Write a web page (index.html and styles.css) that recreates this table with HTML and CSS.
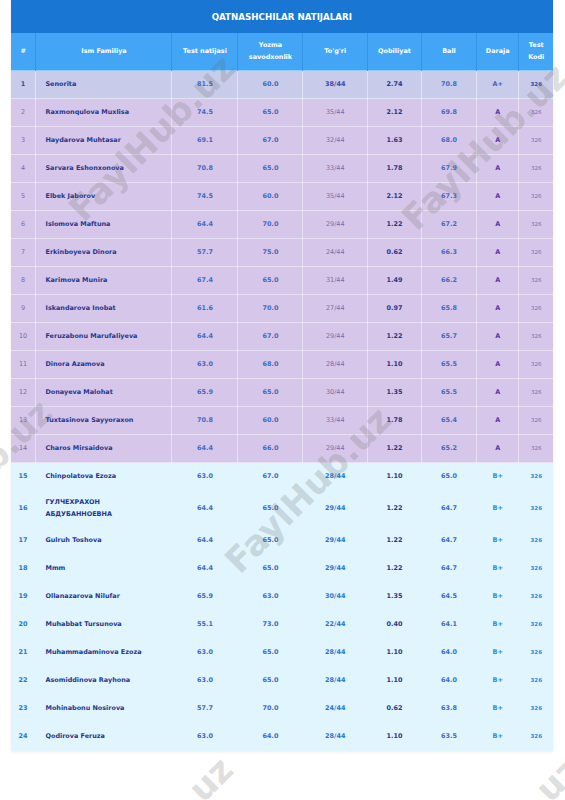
FILE: index.html
```html
<!DOCTYPE html>
<html lang="uz">
<head>
    <meta charset="UTF-8">
    <meta name="viewport" content="width=device-width, initial-scale=1.0">
    <title>Qatnashchilar natijalari</title>
    <link rel="stylesheet" href="styles.css">
</head>
<body>
    <div class="page">
        <div class="results">
            <div class="results-title">QATNASHCHILAR NATIJALARI</div>
            <table class="results-table">
                <colgroup>
                    <col style="width: 25.3px">
                    <col style="width: 136px">
                    <col style="width: 66px">
                    <col style="width: 65px">
                    <col style="width: 64.5px">
                    <col style="width: 54px">
                    <col style="width: 55px">
                    <col style="width: 42.5px">
                    <col style="width: 34px">
                </colgroup>
                <thead>
                    <tr>
                        <th>#</th>
                        <th>Ism Familiya</th>
                        <th>Test natijasi</th>
                        <th>Yozma savodxonlik</th>
                        <th>To'g'ri</th>
                        <th>Qobiliyat</th>
                        <th>Ball</th>
                        <th>Daraja</th>
                        <th>Test Kodi</th>
                    </tr>
                </thead>
                <tbody>
                    <tr class="grade-aplus"><td class="num">1</td><td class="name">Senorita</td><td class="score">81.5</td><td class="score">60.0</td><td class="correct">38/44</td><td class="ability">2.74</td><td class="score">70.8</td><td class="grade">A+</td><td class="code">326</td></tr>
                    <tr class="grade-a"><td class="num">2</td><td class="name">Raxmonqulova Muxlisa</td><td class="score">74.5</td><td class="score">65.0</td><td class="correct">35/44</td><td class="ability">2.12</td><td class="score">69.8</td><td class="grade">A</td><td class="code">326</td></tr>
                    <tr class="grade-a"><td class="num">3</td><td class="name">Haydarova Muhtasar</td><td class="score">69.1</td><td class="score">67.0</td><td class="correct">32/44</td><td class="ability">1.63</td><td class="score">68.0</td><td class="grade">A</td><td class="code">326</td></tr>
                    <tr class="grade-a"><td class="num">4</td><td class="name">Sarvara Eshonxonova</td><td class="score">70.8</td><td class="score">65.0</td><td class="correct">33/44</td><td class="ability">1.78</td><td class="score">67.9</td><td class="grade">A</td><td class="code">326</td></tr>
                    <tr class="grade-a"><td class="num">5</td><td class="name">Elbek Jaborov</td><td class="score">74.5</td><td class="score">60.0</td><td class="correct">35/44</td><td class="ability">2.12</td><td class="score">67.3</td><td class="grade">A</td><td class="code">326</td></tr>
                    <tr class="grade-a"><td class="num">6</td><td class="name">Islomova Maftuna</td><td class="score">64.4</td><td class="score">70.0</td><td class="correct">29/44</td><td class="ability">1.22</td><td class="score">67.2</td><td class="grade">A</td><td class="code">326</td></tr>
                    <tr class="grade-a"><td class="num">7</td><td class="name">Erkinboyeva Dinora</td><td class="score">57.7</td><td class="score">75.0</td><td class="correct">24/44</td><td class="ability">0.62</td><td class="score">66.3</td><td class="grade">A</td><td class="code">326</td></tr>
                    <tr class="grade-a"><td class="num">8</td><td class="name">Karimova Munira</td><td class="score">67.4</td><td class="score">65.0</td><td class="correct">31/44</td><td class="ability">1.49</td><td class="score">66.2</td><td class="grade">A</td><td class="code">326</td></tr>
                    <tr class="grade-a"><td class="num">9</td><td class="name">Iskandarova Inobat</td><td class="score">61.6</td><td class="score">70.0</td><td class="correct">27/44</td><td class="ability">0.97</td><td class="score">65.8</td><td class="grade">A</td><td class="code">326</td></tr>
                    <tr class="grade-a"><td class="num">10</td><td class="name">Feruzabonu Marufaliyeva</td><td class="score">64.4</td><td class="score">67.0</td><td class="correct">29/44</td><td class="ability">1.22</td><td class="score">65.7</td><td class="grade">A</td><td class="code">326</td></tr>
                    <tr class="grade-a"><td class="num">11</td><td class="name">Dinora Azamova</td><td class="score">63.0</td><td class="score">68.0</td><td class="correct">28/44</td><td class="ability">1.10</td><td class="score">65.5</td><td class="grade">A</td><td class="code">326</td></tr>
                    <tr class="grade-a"><td class="num">12</td><td class="name">Donayeva Malohat</td><td class="score">65.9</td><td class="score">65.0</td><td class="correct">30/44</td><td class="ability">1.35</td><td class="score">65.5</td><td class="grade">A</td><td class="code">326</td></tr>
                    <tr class="grade-a"><td class="num">13</td><td class="name">Tuxtasinova Sayyoraxon</td><td class="score">70.8</td><td class="score">60.0</td><td class="correct">33/44</td><td class="ability">1.78</td><td class="score">65.4</td><td class="grade">A</td><td class="code">326</td></tr>
                    <tr class="grade-a"><td class="num">14</td><td class="name">Charos Mirsaidova</td><td class="score">64.4</td><td class="score">66.0</td><td class="correct">29/44</td><td class="ability">1.22</td><td class="score">65.2</td><td class="grade">A</td><td class="code">326</td></tr>
                    <tr class="grade-bplus"><td class="num">15</td><td class="name">Chinpolatova Ezoza</td><td class="score">63.0</td><td class="score">67.0</td><td class="correct">28/44</td><td class="ability">1.10</td><td class="score">65.0</td><td class="grade">B+</td><td class="code">326</td></tr>
                    <tr class="grade-bplus"><td class="num">16</td><td class="name">ГУЛЧЕХРАХОН АБДУБАННОЕВНА</td><td class="score">64.4</td><td class="score">65.0</td><td class="correct">29/44</td><td class="ability">1.22</td><td class="score">64.7</td><td class="grade">B+</td><td class="code">326</td></tr>
                    <tr class="grade-bplus"><td class="num">17</td><td class="name">Gulruh Toshova</td><td class="score">64.4</td><td class="score">65.0</td><td class="correct">29/44</td><td class="ability">1.22</td><td class="score">64.7</td><td class="grade">B+</td><td class="code">326</td></tr>
                    <tr class="grade-bplus"><td class="num">18</td><td class="name">Mmm</td><td class="score">64.4</td><td class="score">65.0</td><td class="correct">29/44</td><td class="ability">1.22</td><td class="score">64.7</td><td class="grade">B+</td><td class="code">326</td></tr>
                    <tr class="grade-bplus"><td class="num">19</td><td class="name">Ollanazarova Nilufar</td><td class="score">65.9</td><td class="score">63.0</td><td class="correct">30/44</td><td class="ability">1.35</td><td class="score">64.5</td><td class="grade">B+</td><td class="code">326</td></tr>
                    <tr class="grade-bplus"><td class="num">20</td><td class="name">Muhabbat Tursunova</td><td class="score">55.1</td><td class="score">73.0</td><td class="correct">22/44</td><td class="ability">0.40</td><td class="score">64.1</td><td class="grade">B+</td><td class="code">326</td></tr>
                    <tr class="grade-bplus"><td class="num">21</td><td class="name">Muhammadaminova Ezoza</td><td class="score">63.0</td><td class="score">65.0</td><td class="correct">28/44</td><td class="ability">1.10</td><td class="score">64.0</td><td class="grade">B+</td><td class="code">326</td></tr>
                    <tr class="grade-bplus"><td class="num">22</td><td class="name">Asomiddinova Rayhona</td><td class="score">63.0</td><td class="score">65.0</td><td class="correct">28/44</td><td class="ability">1.10</td><td class="score">64.0</td><td class="grade">B+</td><td class="code">326</td></tr>
                    <tr class="grade-bplus"><td class="num">23</td><td class="name">Mohinabonu Nosirova</td><td class="score">57.7</td><td class="score">70.0</td><td class="correct">24/44</td><td class="ability">0.62</td><td class="score">63.8</td><td class="grade">B+</td><td class="code">326</td></tr>
                    <tr class="grade-bplus"><td class="num">24</td><td class="name">Qodirova Feruza</td><td class="score">63.0</td><td class="score">64.0</td><td class="correct">28/44</td><td class="ability">1.10</td><td class="score">63.5</td><td class="grade">B+</td><td class="code">326</td></tr>
                </tbody>
            </table>
        </div>

        <div class="watermark wm-1">FaylHub.uz</div>
        <div class="watermark wm-2">FaylHub.uz</div>
        <div class="watermark wm-3">FaylHub.uz</div>
        <div class="watermark wm-4">FaylHub.uz</div>
        <div class="watermark wm-5">FaylHub.uz</div>
        <div class="watermark wm-6">FaylHub.uz</div>
    </div>
</body>
</html>
```

FILE: styles.css
```css
:root {
    --title-color: #1976d2;
    --header-color: #42a5f5;
    --aplus-bg: #c8cbe9;
    --a-bg: #d6c7ea;
    --bplus-bg: #e1f5fe;
    --name-color: #24378f;
    --score-color: #3a6cc9;
}
html, body {
    margin: 0;
    padding: 0;
    background-color: #fff;
    overflow: hidden;
}
body {
    font-family: 'DejaVu Sans', 'Noto Sans CJK SC', sans-serif;
}
.page {
    position: relative;
    width: 565px;
    height: 800px;
    overflow: hidden;
}
.results {
    margin-left: 10.7px;
    width: 542.3px;
    box-shadow: 0 1px 3px rgba(0, 0, 0, 0.08);
}
.results-title {
    height: 33px;
    line-height: 34px;
    background-color: var(--title-color);
    color: #fff;
    font-size: 8.7px;
    font-weight: bold;
    text-align: center;
}
.results-table {
    width: 100%;
    table-layout: fixed;
    border-collapse: collapse;
    font-size: 6.45px;
    line-height: 11.5px;
}
.results-table th {
    height: 37px;
    box-sizing: border-box;
    padding: 7px 2px;
    background-color: var(--header-color);
    color: #fff;
    font-weight: bold;
    text-align: center;
    border-left: 1px solid rgba(25, 118, 210, 0.35);
}
.results-table th:first-child {
    border-left: none;
}
.results-table td {
    padding: 6px 2px;
    text-align: center;
    font-weight: bold;
    border: 1px solid rgba(255, 255, 255, 0.45);
}
.results-table tbody tr {
    height: 28px;
}
.results-table td:first-child {
    border-left: none;
}
.results-table td:last-child {
    border-right: none;
}
.results-table td.name {
    text-align: left;
    padding-left: 9px;
    padding-right: 10px;
    color: var(--name-color);
}
.results-table td.score {
    color: var(--score-color);
}
.results-table td.ability {
    color: #283593;
}
.results-table td.code {
    font-size: 5.5px;
}

/* A+ */
.grade-aplus {
    background-color: var(--aplus-bg);
}
.grade-aplus .num,
.grade-aplus .correct,
.grade-aplus .code {
    color: #3949ab;
}
.grade-aplus .grade {
    color: #5360b8;
}

/* A */
.grade-a {
    background-color: var(--a-bg);
}
.grade-a .num,
.grade-a .correct,
.grade-a .code {
    font-weight: normal;
    color: #7b68ad;
}
.grade-a .grade {
    color: #5e35b1;
}

/* B+ */
.grade-bplus {
    background-color: var(--bplus-bg);
}
.grade-bplus td {
    border-color: transparent;
}
.grade-bplus .num,
.grade-bplus .correct {
    color: #1e78cf;
}
.grade-bplus .grade,
.grade-bplus .code {
    color: #2b8be0;
}

.watermark {
    position: absolute;
    width: 260px;
    margin-left: -130px;
    margin-top: -20px;
    height: 40px;
    line-height: 40px;
    text-align: center;
    font-size: 35px;
    font-weight: bold;
    color: rgba(110, 110, 110, 0.24);
    transform: rotate(-45deg);
    pointer-events: none;
    white-space: nowrap;
}
.wm-1 { left: 152px; top: 138px; }
.wm-2 { left: 485px; top: 147px; }
.wm-3 { left: -31px; top: 483px; }
.wm-4 { left: 308px; top: 490px; }
.wm-5 { left: 150px; top: 840px; }
.wm-6 { left: 497px; top: 840px; }
```
